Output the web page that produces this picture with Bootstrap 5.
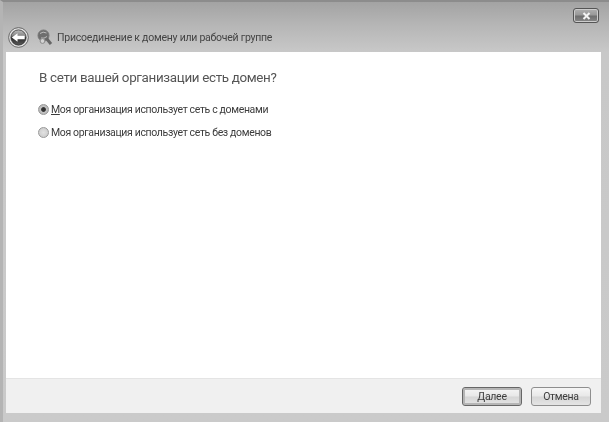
<!DOCTYPE html>
<html lang="ru">
<head>
  <meta charset="UTF-8">
  <meta name="viewport" content="width=device-width, initial-scale=1">
  <title>Присоединение к домену или рабочей группе</title>

  <link href="https://cdn.jsdelivr.net/npm/bootstrap@5.3.3/dist/css/bootstrap.min.css" rel="stylesheet">
  <script src="https://cdn.jsdelivr.net/npm/bootstrap@5.3.3/dist/js/bootstrap.bundle.min.js"></script>

  <style>
    html, body {
      height: 422px;
      overflow: hidden;
    }

    body {
      background-color: #c9c9c9;
      font-family: Roboto, "Liberation Sans", sans-serif;
      color: #333;
    }

    .win-frame {
      width: 609px;
      height: 422px;
      border-top: 2px solid #8c8c8c;
      border-left: 3px solid #b4b4b4;
      background: linear-gradient(180deg, #a3a3a3 0, #b5b5b5 22px, #c8c8c8 50px, #cacaca 100%);
      padding: 0 8px 9px 3px;
      filter: blur(0.4px);
    }

    .win-close-row {
      height: 21px;
      padding-top: 6px;
      padding-right: 2px;
    }

    .win-close {
      width: 26px;
      height: 15px;
      border: 1px solid #555;
      border-radius: 3px;
      background: linear-gradient(180deg, #b0b0b0 0, #999 45%, #6f6f6f 55%, #888 100%);
      box-shadow: inset 0 0 0 1px #ccc;
    }

    .win-head {
      height: 29px;
      padding-left: 2px;
    }

    .win-title {
      font-size: 10.5px;
      letter-spacing: -0.25px;
      color: #444;
    }

    .win-body {
      height: 326px;
      padding: 16px 0 0 32px;
    }

    .win-question {
      font-size: 13.4px;
      letter-spacing: -0.33px;
      line-height: 20px;
      color: #555;
      margin-bottom: 10px;
      margin-left: 1px;
    }

    .win-option {
      height: 23px;
      gap: 2px;
      font-size: 10.5px;
      letter-spacing: -0.35px;
      color: #3c3c3c;
    }

    .win-radio {
      width: 11px;
      height: 11px;
      flex: none;
      border-radius: 50%;
      border: 1px solid #999;
      background: radial-gradient(circle, #e2e2e2 0, #cfcfcf 70%, #bbb 100%);
    }

    .win-radio-on {
      background: radial-gradient(circle, #333 0, #333 30%, #c4c4c4 45%, #aaa 100%);
    }

    .win-foot {
      height: 35px;
      background-color: #f0f0f0;
      padding-right: 10px;
      gap: 9px;
      border-top: 1px solid #e4e4e4;
    }

    .win-btn {
      width: 60px;
      height: 19px;
      padding: 0;
      font-size: 10.5px;
      letter-spacing: -0.3px;
      line-height: 17px;
      color: #3c3c3c;
      border: 1px solid #8e8e8e;
      border-radius: 3px;
      background: linear-gradient(180deg, #f6f6f6 0, #e8e8e8 48%, #d6d6d6 52%, #e4e4e4 100%);
    }

    .win-btn-main {
      border-color: #666;
      box-shadow: inset 0 0 0 2px #b5b5b5;
    }
  </style>
</head>
<body>

<div class="win-frame d-flex flex-column">
  <div class="win-close-row d-flex justify-content-end">
    <div class="win-close d-flex align-items-center justify-content-center">
      <svg width="9" height="8" viewBox="0 0 9 8"><path d="M1.5 1 L7.5 7 M7.5 1 L1.5 7" stroke="#f4f4f4" stroke-width="2"/></svg>
    </div>
  </div>

  <div class="win-head d-flex align-items-center">
    <svg class="me-2" width="21" height="21" viewBox="0 0 22 22">
      <defs>
        <linearGradient id="backFill" x1="0" y1="0" x2="0" y2="1">
          <stop offset="0" stop-color="#bdbdbd"/>
          <stop offset="0.35" stop-color="#8a8a8a"/>
          <stop offset="0.55" stop-color="#2e2e2e"/>
          <stop offset="1" stop-color="#5a5a5a"/>
        </linearGradient>
      </defs>
      <circle cx="11" cy="11" r="10.3" fill="#e4e4e4" stroke="#555" stroke-width="0.9"/>
      <circle cx="11" cy="11" r="8" fill="url(#backFill)" stroke="#333" stroke-width="0.8"/>
      <path d="M4 11 L10 6.5 V9.2 H17.5 V12.8 H10 V15.5 Z" fill="#fff"/>
    </svg>
    <svg class="me-1" width="16" height="18" viewBox="0 0 16 18">
      <circle cx="6.5" cy="6.5" r="5.5" fill="#6e6e6e" stroke="#777"/>
      <path d="M3 4.5 Q6 2 9.5 4 M4 9 Q7 10 10 7.5" fill="none" stroke="#bdbdbd"/>
      <path d="M9.5 9.5 L14 15" stroke="#666" stroke-width="3"/>
      <circle cx="5.5" cy="12" r="2.4" fill="#d4d4d4" stroke="#8a8a8a"/>
    </svg>
    <span class="win-title">Присоединение к домену или рабочей группе</span>
  </div>

  <div class="win-body bg-white">
    <div class="win-question">В сети вашей организации есть домен?</div>
    <div class="win-option d-flex align-items-center">
      <span class="win-radio win-radio-on"></span>
      <span><u>М</u>оя организация использует сеть с доменами</span>
    </div>
    <div class="win-option d-flex align-items-center">
      <span class="win-radio"></span>
      <span>Моя организация использует сеть без доменов</span>
    </div>
  </div>

  <div class="win-foot d-flex align-items-center justify-content-end">
    <button type="button" class="btn win-btn win-btn-main"><u>Д</u>алее</button>
    <button type="button" class="btn win-btn">Отмена</button>
  </div>
</div>

</body>
</html>
